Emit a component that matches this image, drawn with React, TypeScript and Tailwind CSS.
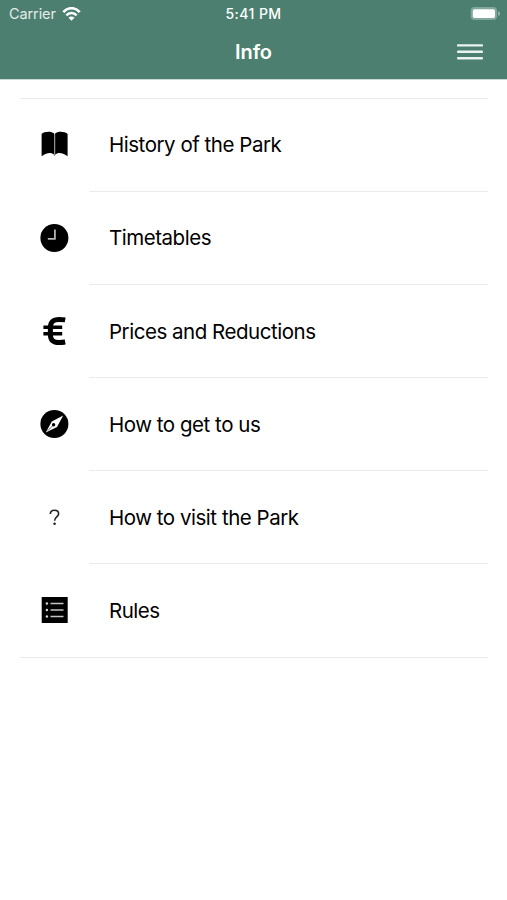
import type { ReactNode } from "react";

const BookIcon = () => (
  <svg viewBox="-0.6 -1 28 28" className="h-7 w-7" fill="black">
    <path d="M1 3C3.2.5 10.6-.4 13.5 2.6v21.2C11 21.6 7.2 21 1 25.2z" />
    <path d="M27 3C24.8.5 17.4-.4 14.5 2.6v21.2c2.5-2.2 6.3-2.8 12.5 1.4z" />
    <path d="M14 3v22" stroke="#888" strokeWidth="1" />
  </svg>
);

const ClockIcon = () => (
  <svg viewBox="0 0 28 28" className="h-7 w-7 overflow-visible">
    <circle cx="14.4" cy="14" r="14" fill="black" />
    <path d="M14.9 5.5v9.3H7.8" fill="none" stroke="#b5b5b5" strokeWidth="1.8" />
  </svg>
);

const EuroIcon = () => (
  <svg viewBox="-0.8 0 28 28" className="h-7 w-7" fill="none" stroke="black">
    <path
      d="M24.4 2.9C22 2.5 20.4 2.5 18.4 2.5 12 2.5 9.6 5.2 9.6 10.6v6.8c0 5.4 2.4 8.1 8.8 8.1 2 0 3.6-.1 6-.5"
      strokeWidth="5"
    />
    <path d="M2.6 10.2h18.8M2.6 16.8h18.8" strokeWidth="3.4" />
  </svg>
);

const CompassIcon = () => (
  <svg viewBox="0 0 28 28" className="h-7 w-7 overflow-visible">
    <circle cx="14.4" cy="14" r="14" fill="black" />
    <path d="M23.2 5.6 17 17 5.8 22.6l6-11z" fill="white" />
    <circle cx="13.6" cy="14.8" r="1.7" fill="black" />
    <path d="M13.2 15.2 7.8 20.7" stroke="black" strokeWidth="0.6" />
  </svg>
);

const QuestionIcon = () => (
  <svg viewBox="-0.4 0 28 28" className="h-7 w-7" fill="none">
    <path
      d="M9.9 11c.1-2.4 1.7-3.8 4.1-3.8s4.2 1.4 4.2 3.6c0 3.2-4 3.1-4 6.9"
      stroke="#222"
      strokeWidth="1.6"
    />
    <circle cx="14.2" cy="20.8" r="1.3" fill="#222" />
  </svg>
);

const ListIcon = () => (
  <svg viewBox="-0.7 0 28 28" className="h-7 w-7">
    <rect x="1" y="1" width="26" height="26" fill="black" />
    <path
      d="M9.8 7.5h13M9.8 14h13M9.8 20.5h13"
      stroke="#c4c4c4"
      strokeWidth="1.3"
    />
    <g fill="#d8d8d8">
      <circle cx="6.2" cy="7.5" r="1.2" />
      <circle cx="6.2" cy="14" r="1.2" />
      <circle cx="6.2" cy="20.5" r="1.2" />
    </g>
  </svg>
);

const items: { label: string; icon: ReactNode }[] = [
  { label: "History of the Park", icon: <BookIcon /> },
  { label: "Timetables", icon: <ClockIcon /> },
  { label: "Prices and Reductions", icon: <EuroIcon /> },
  { label: "How to get to us", icon: <CompassIcon /> },
  { label: "How to visit the Park", icon: <QuestionIcon /> },
  { label: "Rules", icon: <ListIcon /> },
];

const StatusBar = () => (
  <div className="grid h-[27px] grid-cols-3 items-center">
    <div className="flex items-center gap-[6px] pl-[9px]">
      <span className="pt-px text-[14.5px] leading-none tracking-[-0.1px] text-white/85">
        Carrier
      </span>
      <svg viewBox="0 0 20 15" className="h-[14px] w-[19px]" fill="none" stroke="white">
        <path d="M1.2 5.5C6-.1 14 -.1 18.8 5.5" strokeWidth="2.9" />
        <path d="M4.5 8.9c3-3.3 8-3.3 11 0" strokeWidth="2.7" />
        <path d="M10 14.6 6.8 11.4c1.8-1.7 4.6-1.7 6.4 0z" fill="white" stroke="none" />
      </svg>
    </div>
    <span className="pt-px text-center text-[14px] leading-none font-medium tracking-[0.45px]">
      5:41 PM
    </span>
    <div className="flex justify-end pr-[6px]">
      <svg viewBox="0 0 32 15" className="h-[15px] w-8">
        <rect x="1.7" y="1" width="26.3" height="13" rx="3.8" fill="#82a79b" />
        <rect x="3.8" y="3.2" width="22.2" height="8.8" rx="1.8" fill="white" />
        <path d="M29.2 5.2c2.4.9 2.4 3.7 0 4.6z" fill="#9bb9b0" />
      </svg>
    </div>
  </div>
);

export default function App() {
  return (
    <div className="min-h-[900px] w-full bg-white font-['Inter','Liberation_Sans',sans-serif] text-black">
      <header className="h-20 border-b border-[#c5d8d2] bg-[#4c7f70] text-white">
        <StatusBar />
        <div className="grid h-[50px] grid-cols-3 items-center">
          <h1 className="col-start-2 text-center text-[20px] leading-none font-semibold tracking-[-0.1px]">
            Info
          </h1>
          <button aria-label="Menu" className="mr-6 justify-self-end">
            <svg viewBox="0 0 26 18" className="h-[18px] w-[26px]">
              <path
                d="M1 2.4h24M1 8.8h24M1 15.2h24"
                stroke="#e9f3ef"
                strokeWidth="2.4"
                strokeLinecap="round"
              />
            </svg>
          </button>
        </div>
      </header>
      <main className="mr-[19px] ml-5 pt-[17.6px]">
        <ul className="border-y border-[#ebebeb]">
          {items.map(({ label, icon }, i) => (
            <li key={label} className="flex h-[93.1px]">
              <div className="flex w-[68px] items-center justify-center pb-[1.4px]">{icon}</div>
              <div
                className={`ml-px flex flex-1 items-center pt-[2.2px] pl-5 text-[20.5px] tracking-[-0.47px] ${
                  i < items.length - 1 ? "border-b border-[#ebebeb]" : ""
                }`}
              >
                {label}
              </div>
            </li>
          ))}
        </ul>
      </main>
    </div>
  );
}
